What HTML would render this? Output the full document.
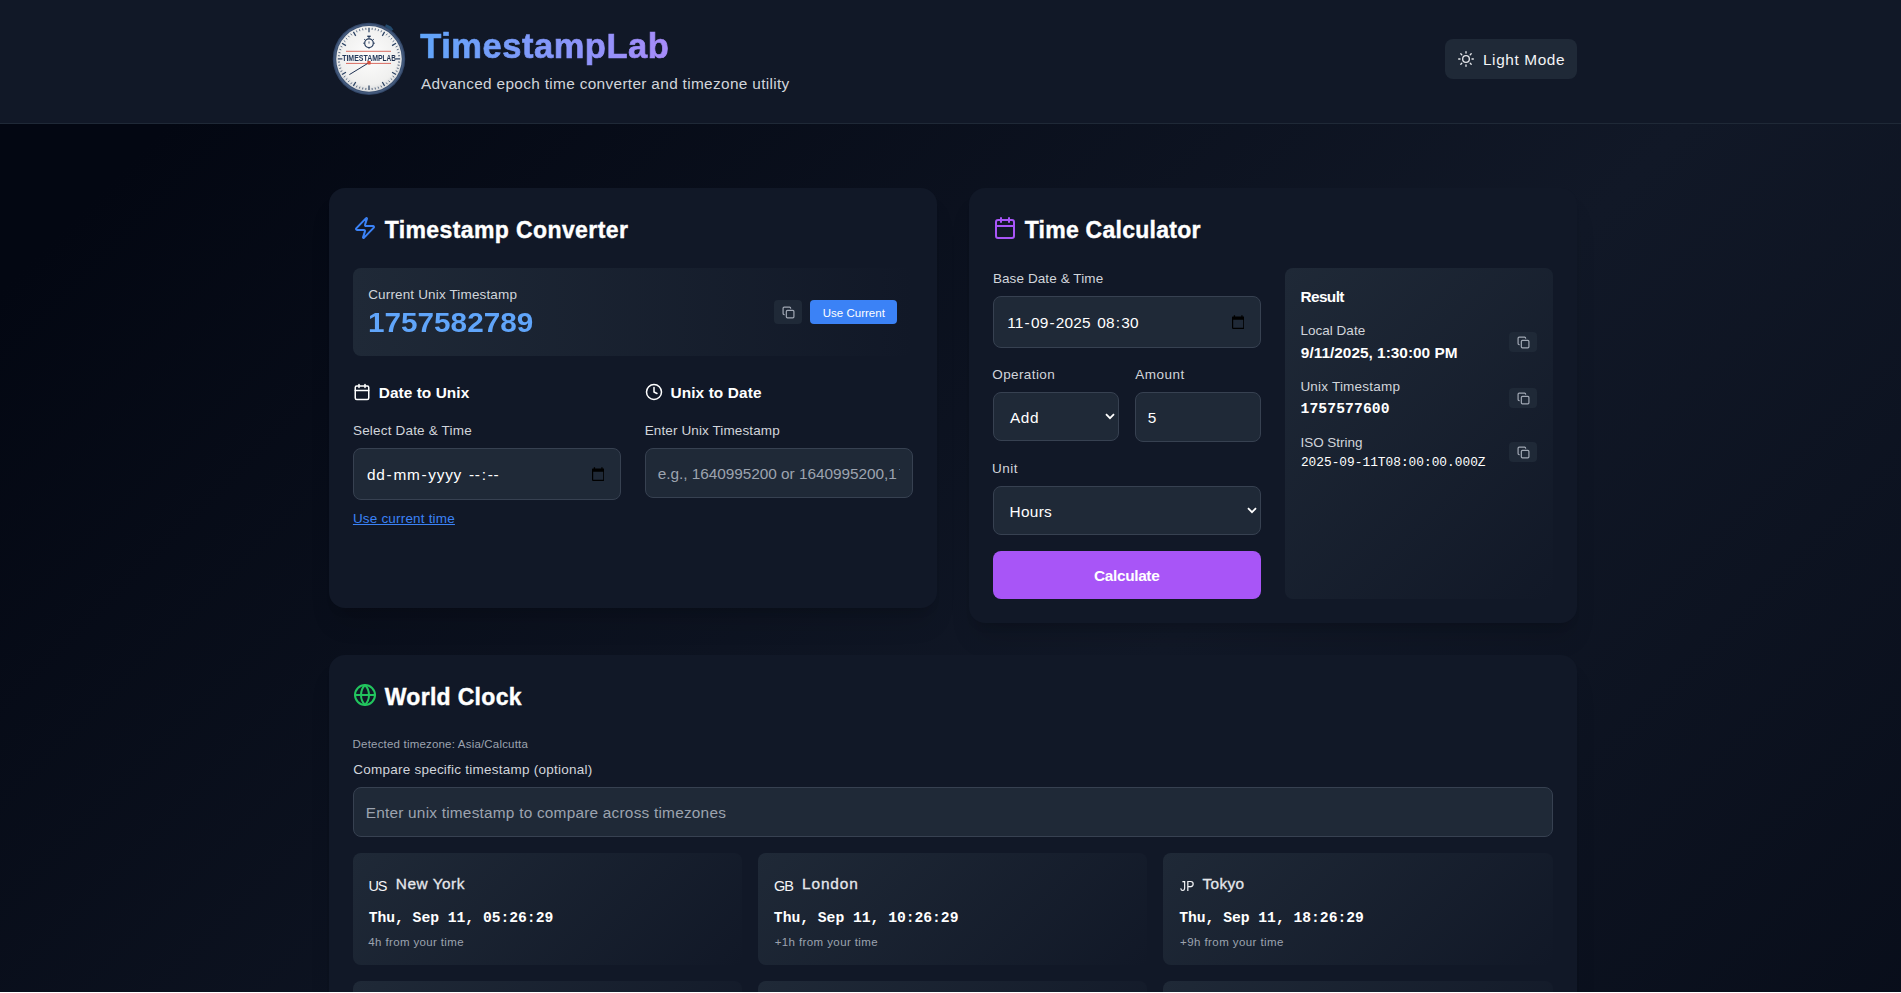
<!DOCTYPE html>
<html lang="en"><head><meta charset="utf-8"><title>TimestampLab</title>
<style>
html,body{margin:0;padding:0;}
body{width:1901px;height:993px;overflow:hidden;position:relative;background:#030712;font-family:"Liberation Sans",sans-serif;}
#pg{position:absolute;left:0;top:0;width:1901px;height:993px;overflow:hidden;background:linear-gradient(135deg,#030712 0%,#030712 8%,#111827 50%,#030712 100%);background-size:1901px 1720px;background-repeat:no-repeat;}
.a{position:absolute;display:block;}
.t{position:absolute;line-height:1;white-space:nowrap;}
.f{padding:0 1px;}
</style></head><body><div id="pg">
<div class="a" style="left:0px;top:0px;width:1901px;height:123px;background:#111827;border-bottom:1px solid #1f2937;"></div>
<svg class="a" style="left:329px;top:19px;opacity:.999" width="80" height="80" viewBox="0 0 80 80">
<defs><radialGradient id="fg" cx="50%" cy="45%" r="55%"><stop offset="0" stop-color="#fdfdfd"/><stop offset="0.8" stop-color="#f0f0ef"/><stop offset="1" stop-color="#d9dadb"/></radialGradient></defs>
<path d="M57 5.2l5 2.2 2.4 3.4-2.2 1.2-6.2-4.6z" fill="#2a5b86" opacity="0.75"/>
<circle cx="40" cy="39.9" r="36.2" fill="#34486a"/>
<circle cx="40" cy="39.9" r="35" fill="#465c7e"/>
<circle cx="40" cy="39.9" r="33.6" fill="#384d6e"/>
<circle cx="40" cy="39.9" r="32.8" fill="url(#fg)"/>
<line x1="40.00" y1="13.30" x2="40.00" y2="8.70" stroke="#2b4263" stroke-width="1.25"/><line x1="43.05" y1="10.86" x2="43.26" y2="8.87" stroke="#2b4263" stroke-width="0.75"/><line x1="46.07" y1="11.34" x2="46.49" y2="9.38" stroke="#2b4263" stroke-width="0.75"/><line x1="49.02" y1="12.13" x2="49.64" y2="10.23" stroke="#2b4263" stroke-width="0.75"/><line x1="51.88" y1="13.22" x2="52.69" y2="11.40" stroke="#2b4263" stroke-width="0.75"/><line x1="53.30" y1="16.86" x2="55.60" y2="12.88" stroke="#2b4263" stroke-width="1.25"/><line x1="57.16" y1="16.28" x2="58.34" y2="14.66" stroke="#2b4263" stroke-width="0.75"/><line x1="59.54" y1="18.20" x2="60.88" y2="16.71" stroke="#2b4263" stroke-width="0.75"/><line x1="61.70" y1="20.36" x2="63.19" y2="19.02" stroke="#2b4263" stroke-width="0.75"/><line x1="63.62" y1="22.74" x2="65.24" y2="21.56" stroke="#2b4263" stroke-width="0.75"/><line x1="63.04" y1="26.60" x2="67.02" y2="24.30" stroke="#2b4263" stroke-width="1.25"/><line x1="66.68" y1="28.02" x2="68.50" y2="27.21" stroke="#2b4263" stroke-width="0.75"/><line x1="67.77" y1="30.88" x2="69.67" y2="30.26" stroke="#2b4263" stroke-width="0.75"/><line x1="68.56" y1="33.83" x2="70.52" y2="33.41" stroke="#2b4263" stroke-width="0.75"/><line x1="69.04" y1="36.85" x2="71.03" y2="36.64" stroke="#2b4263" stroke-width="0.75"/><line x1="66.60" y1="39.90" x2="71.20" y2="39.90" stroke="#2b4263" stroke-width="1.25"/><line x1="69.04" y1="42.95" x2="71.03" y2="43.16" stroke="#2b4263" stroke-width="0.75"/><line x1="68.56" y1="45.97" x2="70.52" y2="46.39" stroke="#2b4263" stroke-width="0.75"/><line x1="67.77" y1="48.92" x2="69.67" y2="49.54" stroke="#2b4263" stroke-width="0.75"/><line x1="66.68" y1="51.78" x2="68.50" y2="52.59" stroke="#2b4263" stroke-width="0.75"/><line x1="63.04" y1="53.20" x2="67.02" y2="55.50" stroke="#2b4263" stroke-width="1.25"/><line x1="63.62" y1="57.06" x2="65.24" y2="58.24" stroke="#2b4263" stroke-width="0.75"/><line x1="61.70" y1="59.44" x2="63.19" y2="60.78" stroke="#2b4263" stroke-width="0.75"/><line x1="59.54" y1="61.60" x2="60.88" y2="63.09" stroke="#2b4263" stroke-width="0.75"/><line x1="57.16" y1="63.52" x2="58.34" y2="65.14" stroke="#2b4263" stroke-width="0.75"/><line x1="53.30" y1="62.94" x2="55.60" y2="66.92" stroke="#2b4263" stroke-width="1.25"/><line x1="51.88" y1="66.58" x2="52.69" y2="68.40" stroke="#2b4263" stroke-width="0.75"/><line x1="49.02" y1="67.67" x2="49.64" y2="69.57" stroke="#2b4263" stroke-width="0.75"/><line x1="46.07" y1="68.46" x2="46.49" y2="70.42" stroke="#2b4263" stroke-width="0.75"/><line x1="43.05" y1="68.94" x2="43.26" y2="70.93" stroke="#2b4263" stroke-width="0.75"/><line x1="40.00" y1="66.50" x2="40.00" y2="71.10" stroke="#2b4263" stroke-width="1.25"/><line x1="36.95" y1="68.94" x2="36.74" y2="70.93" stroke="#2b4263" stroke-width="0.75"/><line x1="33.93" y1="68.46" x2="33.51" y2="70.42" stroke="#2b4263" stroke-width="0.75"/><line x1="30.98" y1="67.67" x2="30.36" y2="69.57" stroke="#2b4263" stroke-width="0.75"/><line x1="28.12" y1="66.58" x2="27.31" y2="68.40" stroke="#2b4263" stroke-width="0.75"/><line x1="26.70" y1="62.94" x2="24.40" y2="66.92" stroke="#2b4263" stroke-width="1.25"/><line x1="22.84" y1="63.52" x2="21.66" y2="65.14" stroke="#2b4263" stroke-width="0.75"/><line x1="20.46" y1="61.60" x2="19.12" y2="63.09" stroke="#2b4263" stroke-width="0.75"/><line x1="18.30" y1="59.44" x2="16.81" y2="60.78" stroke="#2b4263" stroke-width="0.75"/><line x1="16.38" y1="57.06" x2="14.76" y2="58.24" stroke="#2b4263" stroke-width="0.75"/><line x1="16.96" y1="53.20" x2="12.98" y2="55.50" stroke="#2b4263" stroke-width="1.25"/><line x1="13.32" y1="51.78" x2="11.50" y2="52.59" stroke="#2b4263" stroke-width="0.75"/><line x1="12.23" y1="48.92" x2="10.33" y2="49.54" stroke="#2b4263" stroke-width="0.75"/><line x1="11.44" y1="45.97" x2="9.48" y2="46.39" stroke="#2b4263" stroke-width="0.75"/><line x1="10.96" y1="42.95" x2="8.97" y2="43.16" stroke="#2b4263" stroke-width="0.75"/><line x1="13.40" y1="39.90" x2="8.80" y2="39.90" stroke="#2b4263" stroke-width="1.25"/><line x1="10.96" y1="36.85" x2="8.97" y2="36.64" stroke="#2b4263" stroke-width="0.75"/><line x1="11.44" y1="33.83" x2="9.48" y2="33.41" stroke="#2b4263" stroke-width="0.75"/><line x1="12.23" y1="30.88" x2="10.33" y2="30.26" stroke="#2b4263" stroke-width="0.75"/><line x1="13.32" y1="28.02" x2="11.50" y2="27.21" stroke="#2b4263" stroke-width="0.75"/><line x1="16.96" y1="26.60" x2="12.98" y2="24.30" stroke="#2b4263" stroke-width="1.25"/><line x1="16.38" y1="22.74" x2="14.76" y2="21.56" stroke="#2b4263" stroke-width="0.75"/><line x1="18.30" y1="20.36" x2="16.81" y2="19.02" stroke="#2b4263" stroke-width="0.75"/><line x1="20.46" y1="18.20" x2="19.12" y2="16.71" stroke="#2b4263" stroke-width="0.75"/><line x1="22.84" y1="16.28" x2="21.66" y2="14.66" stroke="#2b4263" stroke-width="0.75"/><line x1="26.70" y1="16.86" x2="24.40" y2="12.88" stroke="#2b4263" stroke-width="1.25"/><line x1="28.12" y1="13.22" x2="27.31" y2="11.40" stroke="#2b4263" stroke-width="0.75"/><line x1="30.98" y1="12.13" x2="30.36" y2="10.23" stroke="#2b4263" stroke-width="0.75"/><line x1="33.93" y1="11.34" x2="33.51" y2="9.38" stroke="#2b4263" stroke-width="0.75"/><line x1="36.95" y1="10.86" x2="36.74" y2="8.87" stroke="#2b4263" stroke-width="0.75"/>
<circle cx="40" cy="24.2" r="4.3" fill="none" stroke="#24395a" stroke-width="1.2"/>
<rect x="38.3" y="16.6" width="3.4" height="1.4" fill="#24395a"/>
<line x1="40" y1="18" x2="40" y2="19.6" stroke="#24395a" stroke-width="1.1"/>
<line x1="35.2" y1="20.2" x2="36.4" y2="21.2" stroke="#24395a" stroke-width="1"/>
<line x1="44.8" y1="20.2" x2="43.6" y2="21.2" stroke="#24395a" stroke-width="1"/>
<line x1="34.2" y1="24.2" x2="35.4" y2="24.2" stroke="#24395a" stroke-width="1"/>
<line x1="44.6" y1="24.2" x2="45.8" y2="24.2" stroke="#24395a" stroke-width="1"/>
<line x1="40" y1="28.6" x2="40" y2="29.8" stroke="#24395a" stroke-width="1"/>
<line x1="40" y1="22.4" x2="40" y2="24.6" stroke="#24395a" stroke-width="0.8"/>
<line x1="17" y1="32.3" x2="62" y2="32.3" stroke="#d0473a" stroke-width="0.8"/>
<line x1="17" y1="44.4" x2="62" y2="44.4" stroke="#d0473a" stroke-width="0.8"/>
<text x="13.2" y="41.7" font-family="Liberation Sans, sans-serif" font-size="9" font-weight="700" fill="#22375a" textLength="40.4" lengthAdjust="spacingAndGlyphs">TIMESTAMP</text>
<text x="53.6" y="41.7" font-family="Liberation Sans, sans-serif" font-weight="700" font-size="9" fill="#1b2d4d" textLength="13.2" lengthAdjust="spacingAndGlyphs">LAB</text>
<line x1="39.4" y1="44" x2="20.4" y2="55.6" stroke="#1f3152" stroke-width="1"/>
<rect x="38.3" y="42" width="3.4" height="3.4" rx="0.6" fill="#d4503f"/>
</svg>
<div class="a" style="left:1445px;top:39px;width:132px;height:40px;background:#1f2937;border-radius:8px;"></div>
<svg class="a" style="left:1458px;top:51px" width="16" height="16" viewBox="0 0 24 24" fill="none" stroke="#e5e7eb" stroke-width="2" stroke-linecap="round" stroke-linejoin="round"><circle cx="12" cy="12" r="5"/><path d="M12 1v2"/><path d="M12 21v2"/><path d="m4.22 4.22 1.42 1.42"/><path d="m18.36 18.36 1.42 1.42"/><path d="M1 12h2"/><path d="M21 12h2"/><path d="m4.22 19.78 1.42-1.42"/><path d="m18.36 5.64 1.42-1.42"/></svg>
<div class="a" style="left:329px;top:188px;width:608px;height:420px;background:#111827;border-radius:16px;box-shadow:0 20px 25px -5px rgba(0,0,0,.12),0 8px 10px -6px rgba(0,0,0,.12);"></div>
<div class="a" style="left:969px;top:188px;width:608px;height:435px;background:#111827;border-radius:16px;box-shadow:0 20px 25px -5px rgba(0,0,0,.12),0 8px 10px -6px rgba(0,0,0,.12);"></div>
<div class="a" style="left:329px;top:655px;width:1248px;height:400px;background:#111827;border-radius:16px;box-shadow:0 20px 25px -5px rgba(0,0,0,.12),0 8px 10px -6px rgba(0,0,0,.12);"></div>
<svg class="a" style="left:353px;top:216px" width="24" height="24" viewBox="0 0 24 24" fill="none" stroke="#3b82f6" stroke-width="2" stroke-linecap="round" stroke-linejoin="round"><path d="M4 14a1 1 0 0 1-.78-1.63l9.9-10.2a.5.5 0 0 1 .86.46l-1.92 6.02A1 1 0 0 0 13 10h7a1 1 0 0 1 .78 1.63l-9.9 10.2a.5.5 0 0 1-.86-.46l1.92-6.02A1 1 0 0 0 11 14z"/></svg>
<div class="a" style="left:353px;top:268px;width:560px;height:88px;background:linear-gradient(90deg,#1f2937,#111827);border-radius:8px;"></div>
<div class="a" style="left:774px;top:300px;width:28px;height:24px;background:#1f2937;border-radius:4px;"></div>
<svg class="a" style="left:781.5px;top:305.5px" width="13" height="13" viewBox="0 0 24 24" fill="none" stroke="#a1a8b4" stroke-width="2.2" stroke-linecap="round" stroke-linejoin="round"><rect width="14" height="14" x="8" y="8" rx="2" ry="2"/><path d="M4 16c-1.1 0-2-.9-2-2V4c0-1.1.9-2 2-2h10c1.1 0 2 .9 2 2"/></svg>
<div class="a" style="left:810px;top:300px;width:87px;height:24px;background:#3b82f6;border-radius:4px;"></div>
<svg class="a" style="left:353px;top:383px" width="18" height="18" viewBox="0 0 24 24" fill="none" stroke="#fff" stroke-width="2" stroke-linecap="round" stroke-linejoin="round"><path d="M8 2v4"/><path d="M16 2v4"/><rect width="18" height="18" x="3" y="4" rx="2"/><path d="M3 10h18"/></svg>
<svg class="a" style="left:645px;top:383px" width="18" height="18" viewBox="0 0 24 24" fill="none" stroke="#fff" stroke-width="2" stroke-linecap="round" stroke-linejoin="round"><circle cx="12" cy="12" r="10"/><polyline points="12 6 12 12 16 14"/></svg>
<div class="a" style="left:353px;top:448px;width:268px;height:52px;background:#1f2937;border:1px solid #374151;border-radius:8px;box-sizing:border-box;"></div>
<svg class="a" style="left:591.8px;top:466.7px" width="12.4" height="14" viewBox="0 0 12.4 14"><path fill-rule="evenodd" d="M0 2.4A.8.8 0 0 1 .8 1.6H1.8V.2H3.1V1.6H9.3V.2H10.6V1.6H11.6A.8.8 0 0 1 12.4 2.4V13.1A.8.8 0 0 1 11.6 13.9H.8A.8.8 0 0 1 0 13.1z M1.2 4.7V12.7H11.2V4.7z" fill="#000"/></svg>
<div class="a" style="left:645px;top:448px;width:268px;height:50px;background:#1f2937;border:1px solid #374151;border-radius:8px;box-sizing:border-box;"></div>
<svg class="a" style="left:993px;top:216px" width="24" height="24" viewBox="0 0 24 24" fill="none" stroke="#a855f7" stroke-width="2" stroke-linecap="round" stroke-linejoin="round"><path d="M8 2v4"/><path d="M16 2v4"/><rect width="18" height="18" x="3" y="4" rx="2"/><path d="M3 10h18"/></svg>
<div class="a" style="left:993px;top:296px;width:268px;height:52px;background:#1f2937;border:1px solid #374151;border-radius:8px;box-sizing:border-box;"></div>
<svg class="a" style="left:1231.8px;top:314.7px" width="12.4" height="14" viewBox="0 0 12.4 14"><path fill-rule="evenodd" d="M0 2.4A.8.8 0 0 1 .8 1.6H1.8V.2H3.1V1.6H9.3V.2H10.6V1.6H11.6A.8.8 0 0 1 12.4 2.4V13.1A.8.8 0 0 1 11.6 13.9H.8A.8.8 0 0 1 0 13.1z M1.2 4.7V12.7H11.2V4.7z" fill="#000"/></svg>
<div class="a" style="left:993px;top:392px;width:126px;height:49px;background:#1f2937;border:1px solid #374151;border-radius:8px;box-sizing:border-box;"></div>
<svg class="a" style="left:1105px;top:413px" width="10" height="7" viewBox="0 0 10 7"><path d="M1 1.2 5 5.2 9 1.2" fill="none" stroke="#fff" stroke-width="1.8"/></svg>
<div class="a" style="left:1135px;top:392px;width:126px;height:50px;background:#1f2937;border:1px solid #374151;border-radius:8px;box-sizing:border-box;"></div>
<div class="a" style="left:993px;top:486px;width:268px;height:49px;background:#1f2937;border:1px solid #374151;border-radius:8px;box-sizing:border-box;"></div>
<svg class="a" style="left:1247px;top:507px" width="10" height="7" viewBox="0 0 10 7"><path d="M1 1.2 5 5.2 9 1.2" fill="none" stroke="#fff" stroke-width="1.8"/></svg>
<div class="a" style="left:993px;top:551px;width:268px;height:48px;background:#a855f7;border-radius:8px;"></div>
<div class="a" style="left:1285px;top:268px;width:268px;height:331px;background:linear-gradient(135deg,#1f2937,#111827);border-radius:8px;"></div>
<div class="a" style="left:1509px;top:332px;width:28px;height:20px;background:#1f2937;border-radius:4px;"></div>
<svg class="a" style="left:1516.5px;top:335.5px" width="13" height="13" viewBox="0 0 24 24" fill="none" stroke="#a1a8b4" stroke-width="2.2" stroke-linecap="round" stroke-linejoin="round"><rect width="14" height="14" x="8" y="8" rx="2" ry="2"/><path d="M4 16c-1.1 0-2-.9-2-2V4c0-1.1.9-2 2-2h10c1.1 0 2 .9 2 2"/></svg>
<div class="a" style="left:1509px;top:388px;width:28px;height:20px;background:#1f2937;border-radius:4px;"></div>
<svg class="a" style="left:1516.5px;top:391.5px" width="13" height="13" viewBox="0 0 24 24" fill="none" stroke="#a1a8b4" stroke-width="2.2" stroke-linecap="round" stroke-linejoin="round"><rect width="14" height="14" x="8" y="8" rx="2" ry="2"/><path d="M4 16c-1.1 0-2-.9-2-2V4c0-1.1.9-2 2-2h10c1.1 0 2 .9 2 2"/></svg>
<div class="a" style="left:1509px;top:442px;width:28px;height:20px;background:#1f2937;border-radius:4px;"></div>
<svg class="a" style="left:1516.5px;top:445.5px" width="13" height="13" viewBox="0 0 24 24" fill="none" stroke="#a1a8b4" stroke-width="2.2" stroke-linecap="round" stroke-linejoin="round"><rect width="14" height="14" x="8" y="8" rx="2" ry="2"/><path d="M4 16c-1.1 0-2-.9-2-2V4c0-1.1.9-2 2-2h10c1.1 0 2 .9 2 2"/></svg>
<svg class="a" style="left:353px;top:683px" width="24" height="24" viewBox="0 0 24 24" fill="none" stroke="#22c55e" stroke-width="2" stroke-linecap="round" stroke-linejoin="round"><circle cx="12" cy="12" r="10"/><path d="M12 2a14.5 14.5 0 0 0 0 20 14.5 14.5 0 0 0 0-20"/><path d="M2 12h20"/></svg>
<div class="a" style="left:353px;top:787px;width:1200px;height:50px;background:#1f2937;border:1px solid #374151;border-radius:8px;box-sizing:border-box;"></div>
<div class="a" style="left:353px;top:853px;width:389px;height:112px;background:linear-gradient(135deg,#1f2937,#111827);border-radius:8px;"></div>
<div class="a" style="left:758px;top:853px;width:389px;height:112px;background:linear-gradient(135deg,#1f2937,#111827);border-radius:8px;"></div>
<div class="a" style="left:1163px;top:853px;width:390px;height:112px;background:linear-gradient(135deg,#1f2937,#111827);border-radius:8px;"></div>
<div class="a" style="left:353px;top:981px;width:389px;height:112px;background:linear-gradient(135deg,#1f2937,#111827);border-radius:8px;"></div>
<div class="a" style="left:758px;top:981px;width:389px;height:112px;background:linear-gradient(135deg,#1f2937,#111827);border-radius:8px;"></div>
<div class="a" style="left:1163px;top:981px;width:390px;height:112px;background:linear-gradient(135deg,#1f2937,#111827);border-radius:8px;"></div>
<div class="t" id="title" style="left:420.25px;top:29px;font-size:34.5px;font-weight:700;color:transparent;font-family:'Liberation Sans',sans-serif;letter-spacing:0.522px;-webkit-text-stroke:0.7px transparent;background:linear-gradient(90deg,#60a5fa,#a78bfa);-webkit-background-clip:text;background-clip:text;padding-bottom:8px;">TimestampLab</div>
<div class="t" id="sub" style="left:420.93px;top:76px;font-size:15.4px;font-weight:400;color:#d1d5db;font-family:'Liberation Sans',sans-serif;letter-spacing:0.324px;">Advanced epoch time converter and timezone utility</div>
<div class="t" id="lm" style="left:1482.95px;top:52px;font-size:15.4px;font-weight:400;color:#f3f4f6;font-family:'Liberation Sans',sans-serif;letter-spacing:0.605px;">Light Mode</div>
<div class="t" id="h1" style="left:384.68px;top:219px;font-size:23px;font-weight:700;color:#fff;font-family:'Liberation Sans',sans-serif;letter-spacing:0.396px;-webkit-text-stroke:0.4px #fff;">Timestamp Converter</div>
<div class="t" id="cul" style="left:368.21px;top:288px;font-size:13.5px;font-weight:400;color:#d1d5db;font-family:'Liberation Sans',sans-serif;letter-spacing:0.151px;">Current Unix Timestamp</div>
<div class="t" id="cun" style="left:367.69px;top:310px;font-size:27px;font-weight:700;color:#60a5fa;font-family:'Liberation Sans',sans-serif;letter-spacing:0.006px;transform:scaleX(1.1);transform-origin:0 0;">1757582789</div>
<div class="t" id="uc" style="left:822.67px;top:308px;font-size:11.5px;font-weight:400;color:#fff;font-family:'Liberation Sans',sans-serif;letter-spacing:0.025px;">Use Current</div>
<div class="t" id="d2u" style="left:378.76px;top:385px;font-size:15.4px;font-weight:700;color:#fff;font-family:'Liberation Sans',sans-serif;letter-spacing:0.059px;">Date to Unix</div>
<div class="t" id="u2d" style="left:670.41px;top:385px;font-size:15.4px;font-weight:700;color:#fff;font-family:'Liberation Sans',sans-serif;letter-spacing:0.119px;">Unix to Date</div>
<div class="t" id="sdt" style="left:352.96px;top:424px;font-size:13.5px;font-weight:400;color:#d1d5db;font-family:'Liberation Sans',sans-serif;letter-spacing:0.185px;">Select Date &amp; Time</div>
<div class="t" id="eut" style="left:644.66px;top:424px;font-size:13.5px;font-weight:400;color:#d1d5db;font-family:'Liberation Sans',sans-serif;letter-spacing:0.119px;">Enter Unix Timestamp</div>
<div class="t" id="ddmm" style="left:366.00px;top:467px;font-size:15.4px;font-weight:400;color:#fff;font-family:'Liberation Sans',sans-serif;letter-spacing:0.713px;"><span class="f">dd</span>-<span class="f">mm</span>-<span class="f">yyyy</span> <span class="f">--</span>:<span class="f">--</span></div>
<div class="t" id="eg" style="left:657.78px;top:466px;font-size:15.4px;font-weight:400;color:#9ca3af;font-family:'Liberation Sans',sans-serif;letter-spacing:-0.045px;">e.g., 1640995200 or 1640995200,1</div>
<div class="t" id="egt" style="left:898.60px;top:466px;font-size:15.4px;font-weight:400;color:#9ca3af;font-family:'Liberation Sans',sans-serif;clip-path:inset(0 7.4px 0 0);">7</div>
<div class="t" id="uct" style="left:352.92px;top:512px;font-size:13.5px;font-weight:400;color:#3b82f6;font-family:'Liberation Sans',sans-serif;letter-spacing:0.187px;text-decoration:underline;text-underline-offset:1px;">Use current time</div>
<div class="t" id="h2" style="left:1024.67px;top:219px;font-size:23px;font-weight:700;color:#fff;font-family:'Liberation Sans',sans-serif;letter-spacing:0.261px;-webkit-text-stroke:0.4px #fff;">Time Calculator</div>
<div class="t" id="bdt" style="left:992.91px;top:272px;font-size:13.5px;font-weight:400;color:#d1d5db;font-family:'Liberation Sans',sans-serif;letter-spacing:0.096px;">Base Date &amp; Time</div>
<div class="t" id="bdv" style="left:1006.19px;top:315px;font-size:15.4px;font-weight:400;color:#fff;font-family:'Liberation Sans',sans-serif;letter-spacing:0.202px;"><span class="f">11</span>-<span class="f">09</span>-<span class="f">2025</span> <span class="f">08</span>:<span class="f">30</span></div>
<div class="t" id="op" style="left:992.27px;top:368px;font-size:13.5px;font-weight:400;color:#d1d5db;font-family:'Liberation Sans',sans-serif;letter-spacing:0.394px;">Operation</div>
<div class="t" id="am" style="left:1135.31px;top:368px;font-size:13.5px;font-weight:400;color:#d1d5db;font-family:'Liberation Sans',sans-serif;letter-spacing:0.470px;">Amount</div>
<div class="t" id="add" style="left:1009.94px;top:410px;font-size:15.4px;font-weight:400;color:#fff;font-family:'Liberation Sans',sans-serif;letter-spacing:0.559px;">Add</div>
<div class="t" id="five" style="left:1147.66px;top:410px;font-size:15.4px;font-weight:400;color:#fff;font-family:'Liberation Sans',sans-serif;">5</div>
<div class="t" id="unit" style="left:992.12px;top:462px;font-size:13.5px;font-weight:400;color:#d1d5db;font-family:'Liberation Sans',sans-serif;letter-spacing:0.464px;">Unit</div>
<div class="t" id="hours" style="left:1009.53px;top:504px;font-size:15.4px;font-weight:400;color:#fff;font-family:'Liberation Sans',sans-serif;letter-spacing:0.294px;">Hours</div>
<div class="t" id="calc" style="left:1093.99px;top:568px;font-size:15.4px;font-weight:700;color:#fff;font-family:'Liberation Sans',sans-serif;letter-spacing:-0.341px;">Calculate</div>
<div class="t" id="res" style="left:1300.39px;top:289px;font-size:15.4px;font-weight:700;color:#fff;font-family:'Liberation Sans',sans-serif;letter-spacing:-0.585px;">Result</div>
<div class="t" id="ld" style="left:1300.38px;top:324px;font-size:13.5px;font-weight:400;color:#d1d5db;font-family:'Liberation Sans',sans-serif;letter-spacing:0.031px;">Local Date</div>
<div class="t" id="ldv" style="left:1300.85px;top:345px;font-size:15.4px;font-weight:700;color:#fff;font-family:'Liberation Sans',sans-serif;letter-spacing:0.007px;">9/11/2025, 1:30:00 PM</div>
<div class="t" id="ut" style="left:1300.39px;top:380px;font-size:13.5px;font-weight:400;color:#d1d5db;font-family:'Liberation Sans',sans-serif;letter-spacing:0.211px;">Unix Timestamp</div>
<div class="t" id="utv" style="left:1300.51px;top:402px;font-size:14.7px;font-weight:700;color:#fff;font-family:'Liberation Mono',monospace;letter-spacing:0.098px;">1757577600</div>
<div class="t" id="iso" style="left:1300.56px;top:436px;font-size:13.5px;font-weight:400;color:#d1d5db;font-family:'Liberation Sans',sans-serif;letter-spacing:-0.046px;">ISO String</div>
<div class="t" id="isov" style="left:1300.92px;top:457px;font-size:12.8px;font-weight:400;color:#fff;font-family:'Liberation Mono',monospace;letter-spacing:0.013px;">2025-09-11T08:00:00.000Z</div>
<div class="t" id="h3" style="left:384.69px;top:686px;font-size:23px;font-weight:700;color:#fff;font-family:'Liberation Sans',sans-serif;letter-spacing:0.313px;-webkit-text-stroke:0.4px #fff;">World Clock</div>
<div class="t" id="det" style="left:352.61px;top:739px;font-size:11.5px;font-weight:400;color:#9ca3af;font-family:'Liberation Sans',sans-serif;letter-spacing:0.189px;">Detected timezone: Asia/Calcutta</div>
<div class="t" id="cmp" style="left:353.23px;top:763px;font-size:13.5px;font-weight:400;color:#d1d5db;font-family:'Liberation Sans',sans-serif;letter-spacing:0.238px;">Compare specific timestamp (optional)</div>
<div class="t" id="cph" style="left:365.69px;top:805px;font-size:15.4px;font-weight:400;color:#9ca3af;font-family:'Liberation Sans',sans-serif;letter-spacing:0.220px;">Enter unix timestamp to compare across timezones</div>
<div class="t" id="cc1" style="left:368.45px;top:879px;font-size:14.5px;font-weight:400;color:#f3f4f6;font-family:'Liberation Sans',sans-serif;letter-spacing:-1.269px;">US</div>
<div class="t" id="cn1" style="left:395.81px;top:876px;font-size:15.4px;font-weight:400;color:#e5e7eb;font-family:'Liberation Sans',sans-serif;letter-spacing:0.514px;-webkit-text-stroke:0.3px #e5e7eb;">New York</div>
<div class="t" id="ct1" style="left:368.70px;top:911px;font-size:14.7px;font-weight:700;color:#fff;font-family:'Liberation Mono',monospace;letter-spacing:-0.027px;">Thu, Sep 11, 05:26:29</div>
<div class="t" id="co1" style="left:368.37px;top:937px;font-size:11.5px;font-weight:400;color:#9ca3af;font-family:'Liberation Sans',sans-serif;letter-spacing:0.359px;">4h from your time</div>
<div class="t" id="cc2" style="left:773.90px;top:879px;font-size:14.5px;font-weight:400;color:#f3f4f6;font-family:'Liberation Sans',sans-serif;letter-spacing:-0.807px;">GB</div>
<div class="t" id="cn2" style="left:802.05px;top:876px;font-size:15.4px;font-weight:400;color:#e5e7eb;font-family:'Liberation Sans',sans-serif;letter-spacing:0.870px;-webkit-text-stroke:0.3px #e5e7eb;">London</div>
<div class="t" id="ct2" style="left:773.87px;top:911px;font-size:14.7px;font-weight:700;color:#fff;font-family:'Liberation Mono',monospace;letter-spacing:-0.024px;">Thu, Sep 11, 10:26:29</div>
<div class="t" id="co2" style="left:774.68px;top:937px;font-size:11.5px;font-weight:400;color:#9ca3af;font-family:'Liberation Sans',sans-serif;letter-spacing:0.402px;">+1h from your time</div>
<div class="t" id="cc3" style="left:1180.07px;top:879px;font-size:14.5px;font-weight:400;color:#f3f4f6;font-family:'Liberation Sans',sans-serif;letter-spacing:0.081px;transform:scaleX(.84);transform-origin:0 0;">JP</div>
<div class="t" id="cn3" style="left:1202.60px;top:876px;font-size:15.4px;font-weight:400;color:#e5e7eb;font-family:'Liberation Sans',sans-serif;letter-spacing:0.318px;-webkit-text-stroke:0.3px #e5e7eb;">Tokyo</div>
<div class="t" id="ct3" style="left:1179.24px;top:911px;font-size:14.7px;font-weight:700;color:#fff;font-family:'Liberation Mono',monospace;letter-spacing:-0.026px;">Thu, Sep 11, 18:26:29</div>
<div class="t" id="co3" style="left:1180.10px;top:937px;font-size:11.5px;font-weight:400;color:#9ca3af;font-family:'Liberation Sans',sans-serif;letter-spacing:0.423px;">+9h from your time</div>
<div class="a" style="left:0px;top:992px;width:1901px;height:1px;background:#fff;"></div>
</div></body></html>
